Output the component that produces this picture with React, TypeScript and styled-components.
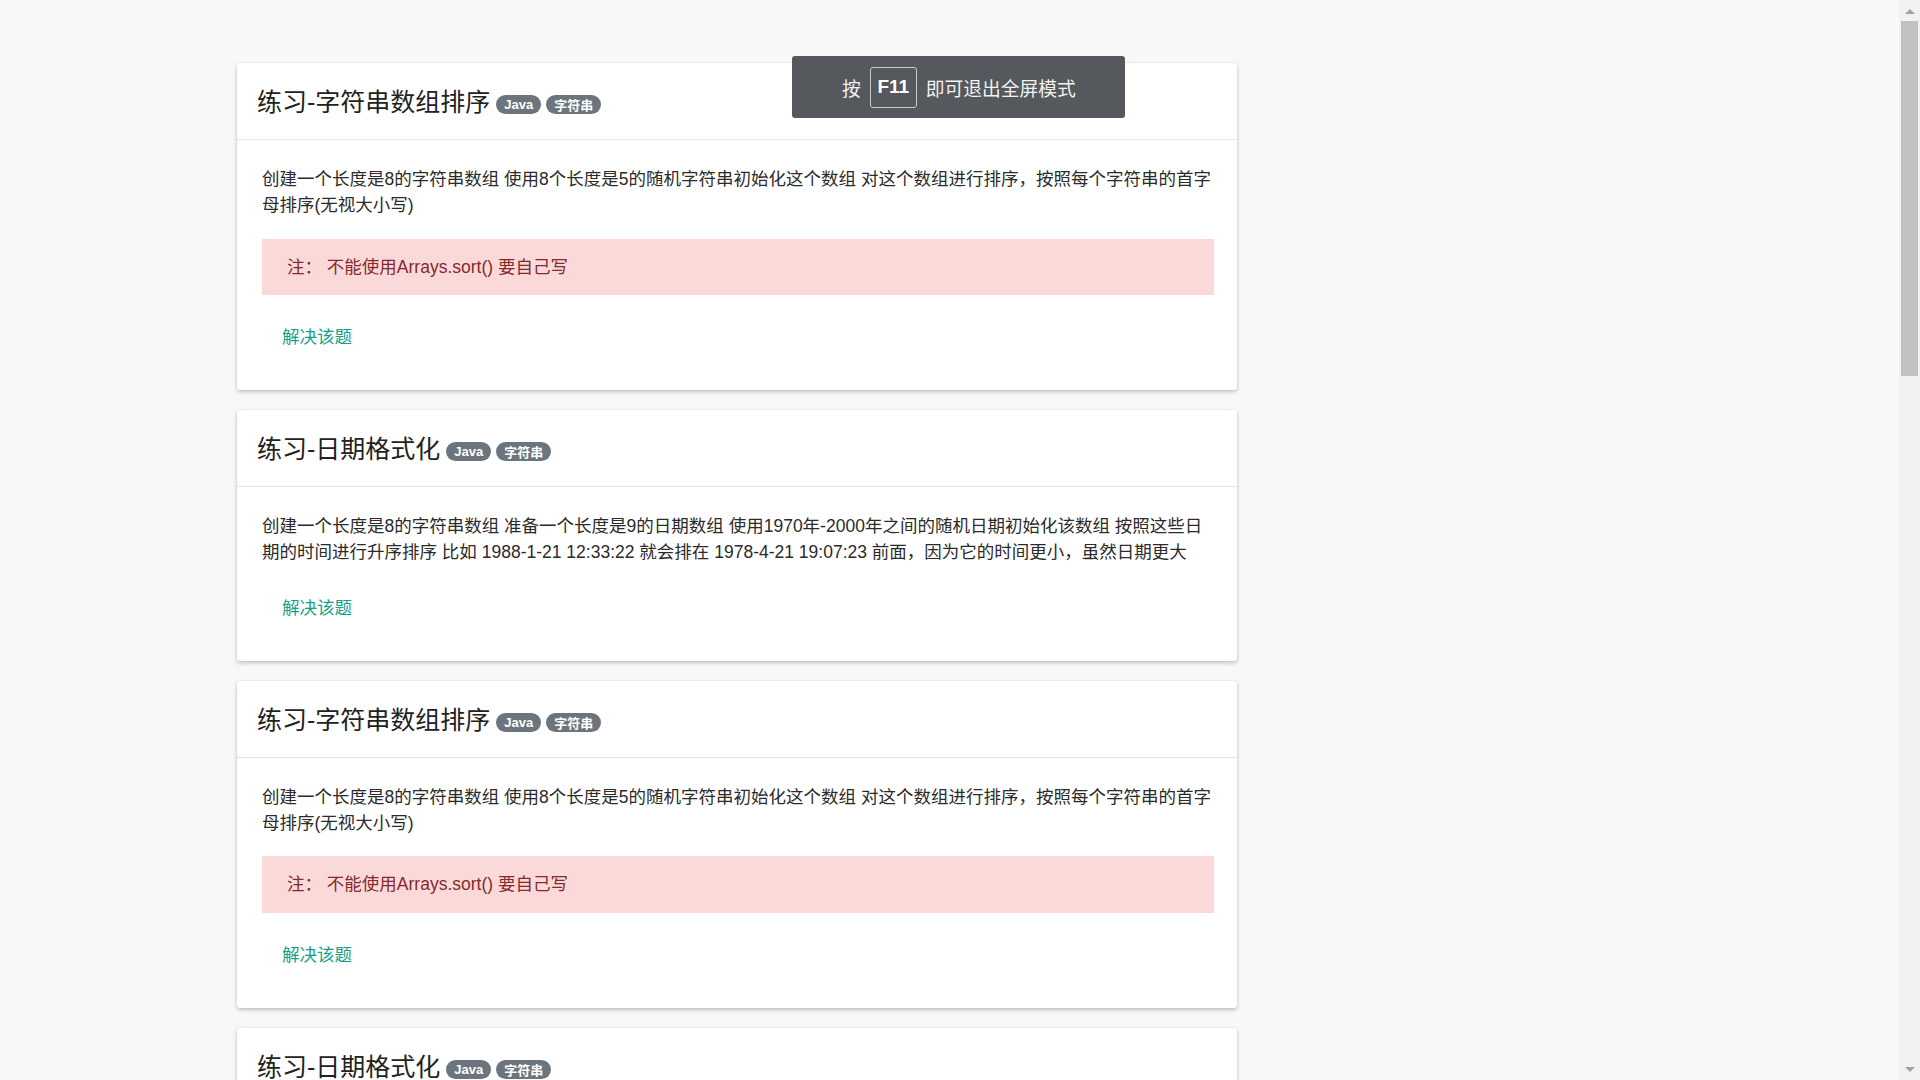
import React from "react";
import styled, { createGlobalStyle } from "styled-components";

const GlobalStyle = createGlobalStyle`
  html, body {
    margin: 0;
    padding: 0;
    height: 100%;
    overflow: hidden;
    background: #f8f8f8;
  }
  body {
    font-family: "Liberation Sans", "Noto Sans CJK SC", sans-serif;
    color: #212529;
  }
  * { box-sizing: border-box; }
`;

const Page = styled.main`
  padding: 63px 0 0 237px;
`;

const Feed = styled.section`
  width: 1000px;
  display: flex;
  flex-direction: column;
  gap: 20px;
`;

const Card = styled.article`
  background: #fff;
  border-radius: 3px;
  box-shadow: 0 2px 4px rgba(0, 0, 0, 0.22), 0 0 2px rgba(0, 0, 0, 0.08);
`;

const CardHeader = styled.header`
  display: flex;
  align-items: center;
  padding: 20px 20px 19px;
  border-bottom: 1px solid #e4e4e4;
`;

const Title = styled.h4`
  margin: 1px 6px 0 0;
  font-size: 25px;
  font-weight: 400;
  line-height: 36px;
  color: #222;
`;

const Badge = styled.span`
  display: inline-flex;
  align-items: center;
  height: 19px;
  margin: 6px 5px 0 0;
  padding: 0 8px;
  border-radius: 10px;
  background: #6c757d;
  color: #fff;
  font-size: 13px;
  font-weight: 700;
`;

const CardBody = styled.div`
  padding: 26px 23px 25px 25px;
  font-size: 17.5px;
  line-height: 1.5;
  color: #2b2b2b;
`;

const Text = styled.p`
  margin: 0 0 20px;
`;

const Alert = styled.div`
  margin: 0 0 20px;
  padding: 15px 25px;
  background: #fcd9d9;
  color: #842a2a;
`;

const SolveLink = styled.a`
  display: inline-block;
  padding: 9px 20px;
  margin-bottom: 6px;
  color: #16a08a;
  text-decoration: none;
  cursor: pointer;
`;

const Toast = styled.div`
  position: fixed;
  top: 56px;
  left: 792px;
  display: flex;
  align-items: center;
  gap: 9px;
  height: 62px;
  padding: 0 49px 0 50px;
  background: #55585d;
  border-radius: 3px;
  color: #f2f2f2;
  font-size: 18.75px;
`;

const Key = styled.kbd`
  display: inline-flex;
  align-items: center;
  justify-content: center;
  width: 47px;
  height: 41px;
  border: 1px solid #c9cacc;
  border-radius: 3px;
  font-family: "Liberation Sans", sans-serif;
  font-size: 19px;
  font-weight: 700;
  color: #fff;
`;

const Scrollbar = styled.div`
  position: fixed;
  top: 0;
  right: 0;
  width: 21px;
  height: 100vh;
  background: #f1f1f1;
  display: flex;
  flex-direction: column;
  align-items: center;
`;

const Arrow = styled.div<{ $down?: boolean }>`
  width: 0;
  height: 0;
  margin: ${(p) => (p.$down ? "auto 0 8px" : "9px 0 0")};
  border-left: 5px solid transparent;
  border-right: 5px solid transparent;
  ${(p) =>
    p.$down ? "border-top: 5px solid #a3a3a3;" : "border-bottom: 5px solid #a3a3a3;"}
`;

const Thumb = styled.div`
  position: absolute;
  top: 21px;
  left: 2px;
  width: 17px;
  height: 355px;
  background: #c1c1c1;
`;

type Exercise = {
  title: string;
  text: string;
  note?: string;
};

const sortTask: Exercise = {
  title: "练习-字符串数组排序",
  text: "创建一个长度是8的字符串数组 使用8个长度是5的随机字符串初始化这个数组 对这个数组进行排序，按照每个字符串的首字母排序(无视大小写)",
  note: "注： 不能使用Arrays.sort() 要自己写",
};

const dateTask: Exercise = {
  title: "练习-日期格式化",
  text: "创建一个长度是8的字符串数组 准备一个长度是9的日期数组 使用1970年-2000年之间的随机日期初始化该数组 按照这些日期的时间进行升序排序 比如 1988-1-21 12:33:22 就会排在 1978-4-21 19:07:23 前面，因为它的时间更小，虽然日期更大",
};

const exercises = [sortTask, dateTask, sortTask, dateTask];

function ExerciseCard({ ex }: { ex: Exercise }) {
  return (
    <Card>
      <CardHeader>
        <Title>{ex.title}</Title>
        <Badge>Java</Badge>
        <Badge>字符串</Badge>
      </CardHeader>
      <CardBody>
        <Text>{ex.text}</Text>
        {ex.note && <Alert>{ex.note}</Alert>}
        <SolveLink>解决该题</SolveLink>
      </CardBody>
    </Card>
  );
}

export default function App() {
  return (
    <>
      <GlobalStyle />
      <Page>
        <Feed>
          {exercises.map((ex, i) => (
            <ExerciseCard key={i} ex={ex} />
          ))}
        </Feed>
      </Page>
      <Toast>
        <span>按</span>
        <Key>F11</Key>
        <span>即可退出全屏模式</span>
      </Toast>
      <Scrollbar>
        <Arrow />
        <Thumb />
        <Arrow $down />
      </Scrollbar>
    </>
  );
}
